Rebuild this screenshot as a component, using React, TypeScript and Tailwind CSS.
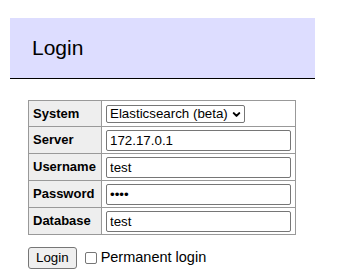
import { ChevronDown } from 'lucide-react';

const fields = [
  { label: 'Username', type: 'text', value: 'test' },
  { label: 'Password', type: 'password', value: 'test' },
  { label: 'Database', type: 'text', value: 'test' },
];

export default function App() {
  return (
    <div className="min-h-[276px] w-[339px] bg-white text-black font-['Liberation_Sans',Arial,sans-serif] pt-[18px]">
      <h2 className="ml-[10px] w-[305px] h-[61px] bg-[#ddf] border-b border-black pl-[22px] pt-[17px] text-[21px] leading-[26px] font-normal">
        Login
      </h2>

      <table className="ml-[28px] mt-[21px] border-collapse text-[13px]">
        <tbody>
          <tr>
            <th className="w-[73px] h-[26px] border border-[#999] bg-[#eee] text-left font-bold px-[4px]">System</th>
            <td className="w-[193px] border border-[#999] px-[4px]">
              <div className="relative w-[139px] h-[18px] border border-[#767676] rounded-[2px] flex items-center pl-[3px] text-[13.33px]">
                Elasticsearch (beta)
                <ChevronDown className="absolute right-[2px] top-[3px] w-[11px] h-[11px]" strokeWidth={4.5} />
              </div>
            </td>
          </tr>
          <tr>
            <th className="h-[27px] border border-[#999] bg-[#eee] text-left font-bold px-[4px]">Server</th>
            <td className="border border-[#999] px-[4px]">
              <input
                readOnly
                value="172.17.0.1"
                className="w-[185px] h-[21px] border border-[#767676] rounded-[2px] px-[3px] text-[13.33px] outline-none"
              />
            </td>
          </tr>
          {fields.map((f) => (
            <tr key={f.label}>
              <th className="h-[27px] border border-[#999] bg-[#eee] text-left font-bold px-[4px]">{f.label}</th>
              <td className="border border-[#999] px-[4px]">
                <input
                  readOnly
                  type={f.type}
                  value={f.value}
                  className="w-[185px] h-[21px] border border-[#767676] rounded-[2px] px-[3px] text-[13.33px] outline-none"
                />
              </td>
            </tr>
          ))}
        </tbody>
      </table>

      <div className="ml-[28px] mt-[12px] flex items-center">
        <button className="h-[22px] px-[7px] bg-[#efefef] border border-[#767676] rounded-[3px] text-[13.33px]">
          Login
        </button>
        <label className="ml-[8px] flex items-center text-[14.5px]">
          <span className="w-[12px] h-[12px] border border-[#767676] rounded-[2px] bg-white mr-[4px]" />
          Permanent login
        </label>
      </div>
    </div>
  );
}
